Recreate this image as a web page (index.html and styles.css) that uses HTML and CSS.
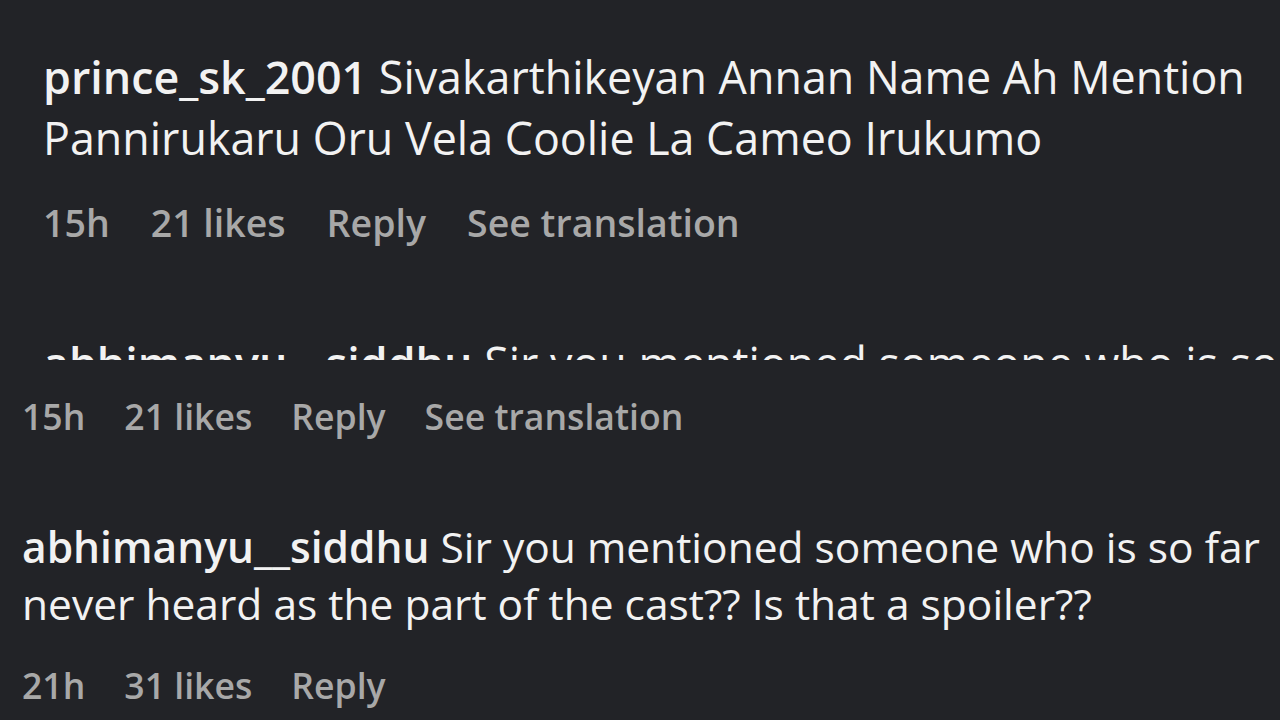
FILE: index.html
```html
<!DOCTYPE html>
<html lang="en">
<head>
<meta charset="utf-8">
<title>Comments</title>
<link rel="stylesheet" href="styles.css">
</head>
<body>
<main class="screen">
  <section class="panel panel-top">
    <ul class="comments">
      <li class="comment">
        <p class="text"><span class="user">prince_sk_2001</span> Sivakarthikeyan Annan Name Ah Mention Pannirukaru Oru Vela Coolie La Cameo Irukumo</p>
        <div class="meta"><span>15h</span><span>21 likes</span><button class="action">Reply</button><button class="action">See translation</button></div>
      </li>
      <li class="comment comment-clipped">
        <p class="text"><span class="user">abhimanyu__siddhu</span> Sir you mentioned someone who is so far</p>
      </li>
    </ul>
  </section>
  <section class="panel panel-bottom">
    <ul class="comments">
      <li class="comment">
        <div class="meta meta-first"><span>15h</span><span>21 likes</span><button class="action">Reply</button><button class="action">See translation</button></div>
      </li>
      <li class="comment">
        <p class="text"><span class="user">abhimanyu__siddhu</span> Sir you mentioned someone who is so far never heard as the part of the cast?? Is that a spoiler??</p>
        <div class="meta"><span>21h</span><span>31 likes</span><button class="action">Reply</button></div>
      </li>
    </ul>
  </section>
</main>
</body>
</html>
```
FILE: styles.css
```css
* { box-sizing: border-box; }

html, body {
  margin: 0;
  padding: 0;
  background: #222327;
}

.screen {
  width: 1280px;
  height: 720px;
  display: flex;
  flex-direction: column;
  font-family: "Open Sans", "Noto Sans", "Liberation Sans", sans-serif;
  color: #f2f2f2;
  overflow: hidden;
}

.panel {
  height: 360px;
  overflow: hidden;
  background: #222327;
}

.comments {
  list-style: none;
  margin: 0;
  padding: 0;
  display: flex;
  flex-direction: column;
}

.text {
  margin: 0;
}

.user {
  font-weight: 600;
}

.meta {
  display: flex;
  align-items: baseline;
  color: #a8a8a8;
  font-weight: 600;
  white-space: nowrap;
}

.action {
  font: inherit;
  color: inherit;
  background: none;
  border: 0;
  padding: 0;
  margin: 0;
  cursor: pointer;
}

/* top crop: larger zoom */
.panel-top {
  padding: 46px 12px 0 43px;
}
.panel-top .comments { gap: 84px; }
.panel-top .text {
  font-size: 44.8px;
  line-height: 61px;
}
.panel-top .meta {
  margin-top: 29px;
  font-size: 37.5px;
  line-height: 51px;
  gap: 41px;
}
.comment-clipped .text {
  white-space: nowrap;
}

/* bottom crop: slightly smaller zoom, scrolled down */
.panel-bottom {
  padding: 32px 0 0 22px;
}
.panel-bottom .comments {
  gap: 77px;
}
.panel-bottom .text {
  font-size: 42.5px;
  line-height: 57px;
}
.panel-bottom .meta {
  margin-top: 29px;
  font-size: 35.6px;
  line-height: 48.5px;
  gap: 39px;
}
.panel-bottom .meta-first {
  margin-top: 0;
}
```
